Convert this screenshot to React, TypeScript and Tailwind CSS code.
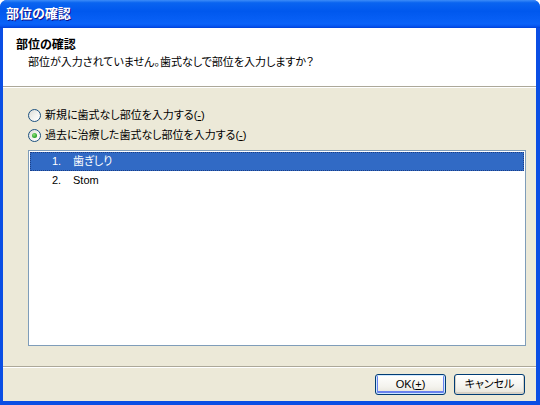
import React from "react";

const font = "font-['Liberation_Sans','Noto_Sans_CJK_JP',sans-serif] [font-feature-settings:'palt']";

function Radio({ checked }: { checked?: boolean }) {
  return (
    <span className="relative inline-flex h-[13px] w-[13px] shrink-0 items-center justify-center rounded-full border border-[#1c5180] bg-[linear-gradient(135deg,#dcdcd7_0%,#f4f4f1_55%,#ffffff_100%)]">
      {checked && (
        <span className="h-[5px] w-[5px] rounded-full bg-[radial-gradient(circle_at_40%_35%,#8ee07a_0%,#2fa82f_60%,#1d8a1d_100%)]" />
      )}
    </span>
  );
}

function Btn({ children, def }: { children: React.ReactNode; def?: boolean }) {
  return (
    <button
      className={
        "flex h-[21px] w-[71px] items-center justify-center rounded-[3px] border border-[#003c74] bg-[linear-gradient(to_bottom,#ffffff_0%,#f4f3ee_60%,#e6e3d8_100%)] text-[11px] leading-none text-black " +
        (def
          ? "shadow-[inset_0_0_0_1px_#cee7ff,inset_0_-1px_0_2px_#6982ee]"
          : "shadow-[inset_0_-1px_0_1px_#d6d0c5]")
      }
    >
      {children}
    </button>
  );
}

export default function App() {
  return (
    <div className={"flex h-[405px] w-[540px] flex-col overflow-hidden rounded-t-[7px] bg-[#0a4ee4] " + font}>
      {/* title bar */}
      <div className="flex h-[28px] shrink-0 items-center bg-[linear-gradient(to_bottom,#3c8cf8_0%,#0a64f0_10%,#0058ee_40%,#0a62f8_85%,#0656f0_93%,#0040d8_100%)] pl-[6px]">
        <span className="text-[13px] font-bold text-white [text-shadow:1px_1px_#0f1089]">部位の確認</span>
      </div>
      {/* client */}
      <div className="mb-[4px] ml-[3px] mr-[4px] flex flex-1 flex-col bg-[#ece9d8]">
        {/* header */}
        <div className="flex h-[58px] shrink-0 flex-col bg-white pl-[13px] pt-[9px] text-[11px] leading-[17px] text-black">
          <div className="text-[12px] font-bold">部位の確認</div>
          <div className="pl-[12px]">部位が入力されていません。歯式なしで部位を入力しますか？</div>
        </div>
        <div className="h-px bg-[#aca899]" />
        <div className="h-px bg-white" />
        {/* body */}
        <div className="flex flex-col pl-[25px] pr-[9px] pt-[17px] text-[11px] text-black">
          <div className="flex h-[20px] items-center gap-[4px]">
            <Radio />
            <span>
              新規に歯式なし部位を入力する(<span className="underline">-</span>)
            </span>
          </div>
          <div className="flex h-[20px] items-center gap-[4px]">
            <Radio checked />
            <span>
              過去に治療した歯式なし部位を入力する(<span className="underline">-</span>)
            </span>
          </div>
          <div className="mt-[5px] flex h-[196px] w-[498px] flex-col border border-[#7f9db9] bg-white p-px">
            <div className="flex h-[19px] items-center border border-dotted border-[#1b3f86] bg-[#316ac5] text-white">
              <span className="w-[42px] pl-[21px]">1.</span>
              <span>歯ぎしり</span>
            </div>
            <div className="flex h-[19px] items-center border border-transparent text-black">
              <span className="w-[42px] pl-[21px]">2.</span>
              <span>Stom</span>
            </div>
          </div>
        </div>
        <div className="flex-1" />
        <div className="h-px bg-[#aca899]" />
        <div className="h-px bg-white" />
        <div className="flex h-[33px] shrink-0 items-center justify-end gap-[8px] pb-[1px] pr-[11px]">
          <Btn def>
            OK(<span className="underline">+</span>)
          </Btn>
          <Btn>キャンセル</Btn>
        </div>
      </div>
    </div>
  );
}
